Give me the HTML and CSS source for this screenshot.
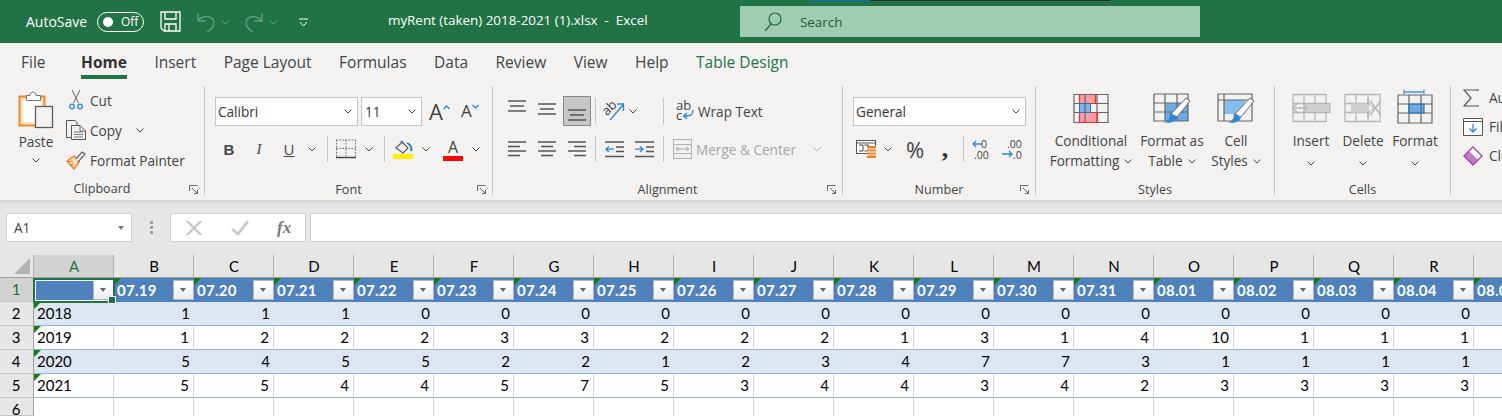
FILE: index.html
```html
<!DOCTYPE html>
<html lang="en">
<head>
<meta charset="utf-8">
<title>myRent (taken) 2018-2021 (1).xlsx - Excel</title>
<link rel="stylesheet" href="styles.css">
</head>
<body>
<div class="app">
<header class="titlebar">
  <div class="strip"><span class="strip-blue"></span><span class="strip-dark"></span></div>
  <span class="autosave">AutoSave</span>
  <span class="toggle"><i class="knob"></i><span>Off</span></span>
  <svg class="qa-save" width="21" height="21" viewBox="0 0 21 21" fill="none" stroke="#fff" stroke-width="1.3"><path d="M1 1H20V20H4L1 17Z"/><path d="M5 1V8H16V1M5 20V13H16V20M9 13V20"/></svg>
  <svg class="qa-undo" width="20" height="20" viewBox="0 0 20 20" fill="none" stroke="#5e9b7c" stroke-width="1.5"><path d="M2 1V9H10M2 9C8 2 18 4 18 11C18 15 15 17 11 20"/></svg>
  <svg class="qa-chev" width="8" height="5" viewBox="0 0 8 5" fill="none" stroke="#5e9b7c"><path d="M0.5 0.5L4 4L7.5 0.5"/></svg>
  <svg class="qa-redo" width="20" height="20" viewBox="0 0 20 20" fill="none" stroke="#5e9b7c" stroke-width="1.5"><path d="M18 1V9H10M18 9C12 2 2 4 2 11C2 15 5 17 9 20"/></svg>
  <svg class="qa-chev" width="8" height="5" viewBox="0 0 8 5" fill="none" stroke="#5e9b7c"><path d="M0.5 0.5L4 4L7.5 0.5"/></svg>
  <svg class="qa-more" width="9" height="9" viewBox="0 0 9 9" fill="none" stroke="#fff"><path d="M0 1H9M1 4L4.5 8L8 4"/></svg>
  <span class="doc-title">myRent (taken) 2018-2021 (1).xlsx&nbsp; -&nbsp; Excel</span>
  <div class="search">
    <svg width="18" height="20" viewBox="0 0 18 20" fill="none" stroke="#1f6b43" stroke-width="1.2"><circle cx="11" cy="7" r="6"/><path d="M7 12L1 19"/></svg>
    <span>Search</span>
  </div>
</header>

<nav class="tabs">
  <span class="tab tab-file">File</span>
  <span class="tab tab-active">Home</span>
  <span class="tab">Insert</span>
  <span class="tab">Page Layout</span>
  <span class="tab">Formulas</span>
  <span class="tab">Data</span>
  <span class="tab">Review</span>
  <span class="tab">View</span>
  <span class="tab">Help</span>
  <span class="tab tab-ctx">Table Design</span>
</nav>

<section class="ribbon">
  <div class="group g-clip">
    <div class="group-body clip-body">
      <div class="paste">
        <svg width="36" height="39" viewBox="0 0 36 39" fill="none">
          <rect x="1.5" y="6.5" width="25" height="29" fill="#fde3b8" stroke="#e88a2e" stroke-width="2"/>
          <rect x="5" y="10" width="18" height="22" fill="#fff"/>
          <path d="M8.500 10.500V5.500H12C12 1 18 1 18 5.500H22.500V10.500Z" fill="#fff" stroke="#737373"/>
          <rect x="17.500" y="16.500" width="17" height="21" fill="#f3f2f1" stroke="#5c5c5c" stroke-width="1.300"/>
        </svg>
        <span class="paste-label">Paste</span>
        <svg class="chev" width="8" height="5" viewBox="0 0 8 5"><path d="M0.500 0.500L4 4L7.500 0.500"/></svg>
      </div>
      <div class="clip-list">
        <div class="clip-row">
          <span class="clip-ic"><svg width="14" height="20" viewBox="0 0 14 20" fill="none"><path d="M3 0L9.500 13M11 0L4.500 13" stroke="#666"/><circle cx="3" cy="16.500" r="2.300" stroke="#2b88d8" stroke-width="1.300"/><circle cx="11" cy="16.500" r="2.300" stroke="#2b88d8" stroke-width="1.300"/></svg></span>
          <span>Cut</span>
        </div>
        <div class="clip-row">
          <span class="clip-ic"><svg width="20" height="20" viewBox="0 0 20 20" fill="none" stroke="#555"><path d="M5.500 17.500H0.500V0.500H9L11 2.500V5"/><path d="M5.500 5.500H14L19.500 11V19.500H5.500Z" fill="#f3f2f1"/><path d="M14 5.500V11H19.500M8 12H17M8 14.500H17M8 17H17" stroke-width=".8"/></svg></span>
          <span>Copy</span>
          <svg class="chev copy-chev" width="8" height="5" viewBox="0 0 8 5"><path d="M0.500 0.500L4 4L7.500 0.500"/></svg>
        </div>
        <div class="clip-row">
          <span class="clip-ic"><svg width="20" height="19" viewBox="0 0 20 19" fill="none"><path d="M1 10L8 5L13 11L8 18Z" fill="#fbe0bd" stroke="#e8842c" stroke-width="1.500"/><path d="M1.500 10L7 11M4 14L8 13" stroke="#e8842c"/><path d="M10 8L16 1L19 3L12 11" stroke="#666" stroke-width="1.300" fill="#fff"/></svg></span>
          <span>Format Painter</span>
        </div>
      </div>
    </div>
    <div class="group-label">Clipboard</div>
    <svg class="launcher" width="9" height="9" viewBox="0 0 9 9" fill="none" stroke="#666"><path d="M0.500 6V0.500H8.500M3 3L8.500 8.500M5 8.500H8.500V5"/></svg>
  </div>

  <div class="group g-font">
    <div class="group-body">
      <div class="tool-row font-row1">
        <span class="combo combo-font"><span>Calibri</span><svg class="chev" width="8" height="5" viewBox="0 0 8 5"><path d="M0.500 0.500L4 4L7.500 0.500"/></svg></span>
        <span class="combo combo-size"><span>11</span><svg class="chev" width="8" height="5" viewBox="0 0 8 5"><path d="M0.500 0.500L4 4L7.500 0.500"/></svg></span>
        <span class="grow">A<svg width="7" height="5" viewBox="0 0 7 5" fill="none" stroke="#2b88d8" stroke-width="1.300"><path d="M0.500 4L3.500 1L6.500 4"/></svg></span>
        <span class="shrink">A<svg width="7" height="5" viewBox="0 0 7 5" fill="none" stroke="#2b88d8" stroke-width="1.300"><path d="M0.500 1L3.500 4L6.500 1"/></svg></span>
      </div>
      <div class="tool-row font-row2">
        <span class="btn fmt-b">B</span>
        <span class="btn fmt-i">I</span>
        <span class="btn fmt-u">U</span>
        <span class="dd"><svg class="chev" width="8" height="5" viewBox="0 0 8 5"><path d="M0.500 0.500L4 4L7.500 0.500"/></svg></span>
        <span class="sep"></span>
        <span class="btn"><svg width="20" height="20" viewBox="0 0 20 20" fill="none" stroke="#666"><path d="M0.500 1V18M19.500 1V18M0.500 1H19.500M0.500 9.500H19.500M10 1V18" stroke-dasharray="1.500 1.500"/><path d="M0 18.500H20" stroke="#444" stroke-width="1.500"/></svg></span>
        <span class="dd"><svg class="chev" width="8" height="5" viewBox="0 0 8 5"><path d="M0.500 0.500L4 4L7.500 0.500"/></svg></span>
        <span class="sep"></span>
        <span class="btn"><svg width="20" height="20" viewBox="0 0 20 20" fill="none"><path d="M3 9L9 3L15 9L10 14Z" fill="#f3f2f1" stroke="#555" stroke-width="1.100"/><path d="M8 2L10 4M14 4C18 6 19 9 18 12" stroke="#1e78c8" stroke-width="1.800"/><rect y="15" width="20" height="5" fill="#ffee00"/></svg></span>
        <span class="dd"><svg class="chev" width="8" height="5" viewBox="0 0 8 5"><path d="M0.500 0.500L4 4L7.500 0.500"/></svg></span>
        <span class="btn color-btn"><span class="color-a">A</span><i class="color-bar"></i></span>
        <span class="dd"><svg class="chev" width="8" height="5" viewBox="0 0 8 5"><path d="M0.500 0.500L4 4L7.500 0.500"/></svg></span>
      </div>
    </div>
    <div class="group-label">Font</div>
    <svg class="launcher" width="9" height="9" viewBox="0 0 9 9" fill="none" stroke="#666"><path d="M0.500 6V0.500H8.500M3 3L8.500 8.500M5 8.500H8.500V5"/></svg>
  </div>

  <div class="group g-align">
    <div class="group-body">
      <div class="tool-row align-row">
        <span class="btn"><svg width="20" height="30" viewBox="0 0 20 30" stroke="#555" stroke-width="1.400"><path d="M1 5H19M3 10H17M1 15H19"/></svg></span>
        <span class="btn"><svg width="20" height="30" viewBox="0 0 20 30" stroke="#555" stroke-width="1.400"><path d="M1 8H19M3 13H17M1 18H19"/></svg></span>
        <span class="btn btn-on"><svg width="20" height="28" viewBox="0 0 20 28" stroke="#555" stroke-width="1.400"><path d="M1 13H19M3 18H17M1 23H19"/></svg></span>
        <span class="sep sep-a"></span>
        <span class="btn-orient"><svg width="22" height="22" viewBox="0 0 22 22" fill="none"><text x="0" y="13" class="svg-ab" transform="rotate(-45 6 10)">ab</text><path d="M7 20L20 5M14 4H20.500V11" stroke="#2b88d8" stroke-width="1.300"/></svg></span>
        <span class="dd"><svg class="chev" width="8" height="5" viewBox="0 0 8 5"><path d="M0.500 0.500L4 4L7.500 0.500"/></svg></span>
        <span class="sep sep-b"></span>
        <span class="wide-btn"><svg width="18" height="22" viewBox="0 0 18 22" fill="none"><text x="0" y="10" class="svg-ab">ab</text><text x="0" y="20" class="svg-ab">c</text><path d="M17 10C17 15 15 16 8 16M11 13L7.500 16L11 19" stroke="#2b88d8" stroke-width="1.300"/></svg><span>Wrap Text</span></span>
      </div>
      <div class="tool-row align-row align-row2">
        <span class="btn"><svg width="20" height="16" viewBox="0 0 20 16" stroke="#555" stroke-width="1.300"><path d="M1 1H19M1 5.500H13M1 10H19M1 14.500H13"/></svg></span>
        <span class="btn"><svg width="20" height="16" viewBox="0 0 20 16" stroke="#555" stroke-width="1.300"><path d="M1 1H19M4 5.500H16M1 10H19M4 14.500H16"/></svg></span>
        <span class="btn"><svg width="20" height="16" viewBox="0 0 20 16" stroke="#555" stroke-width="1.300"><path d="M1 1H19M7 5.500H19M1 10H19M7 14.500H19"/></svg></span>
        <span class="sep sep-a"></span>
        <span class="btn btn-ind"><svg width="19" height="17" viewBox="0 0 19 17" fill="none"><path d="M0 1H19M11 6H19M11 10.500H19M0 15.500H19" stroke="#555" stroke-width="1.300"/><path d="M9 8.200H1M4 5.500L1 8.200L4 11" stroke="#2b88d8" stroke-width="1.300"/></svg></span>
        <span class="btn btn-ind"><svg width="19" height="17" viewBox="0 0 19 17" fill="none"><path d="M0 1H19M11 6H19M11 10.500H19M0 15.500H19" stroke="#555" stroke-width="1.300"/><path d="M0 8.200H8M5 5.500L8 8.200L5 11" stroke="#2b88d8" stroke-width="1.300"/></svg></span>
        <span class="sep sep-c"></span>
        <span class="wide-btn merge"><svg width="19" height="20" viewBox="0 0 19 20" fill="none" stroke="#b3b3b3"><rect x=".5" y=".5" width="18" height="19" stroke-width="1.200"/><path d="M0 5.500H19M0 14.500H19"/><path d="M3 10H16M6 8L3 10L6 12M13 8L16 10L13 12" stroke="#a8a8a8"/></svg><span>Merge &amp; Center</span><svg class="chev chev-off merge-chev" width="8" height="5" viewBox="0 0 8 5"><path d="M0.500 0.500L4 4L7.500 0.500"/></svg></span>
      </div>
    </div>
    <div class="group-label">Alignment</div>
    <svg class="launcher" width="9" height="9" viewBox="0 0 9 9" fill="none" stroke="#666"><path d="M0.500 6V0.500H8.500M3 3L8.500 8.500M5 8.500H8.500V5"/></svg>
  </div>

  <div class="group g-num">
    <div class="group-body">
      <div class="tool-row num-row1">
        <span class="combo combo-num"><span>General</span><svg class="chev" width="8" height="5" viewBox="0 0 8 5"><path d="M0.500 0.500L4 4L7.500 0.500"/></svg></span>
      </div>
      <div class="tool-row num-row2">
        <span class="btn"><svg width="21" height="20" viewBox="0 0 21 20" fill="none"><rect x=".5" y="1.500" width="19" height="13" fill="#fff" stroke="#555"/><path d="M.5 4H19.500" stroke="#555"/><path d="M3 6H7V12H3M8.500 6H12.500V12H8.500" stroke="#444"/><path d="M11 7H20V19H11Z" fill="#e8842c"/><path d="M11 10H20M11 13H20M11 16H20" stroke="#fff"/></svg></span>
        <span class="dd dd-num"><svg class="chev" width="8" height="5" viewBox="0 0 8 5"><path d="M0.500 0.500L4 4L7.500 0.500"/></svg></span>
        <span class="btn pct">%</span>
        <span class="btn comma">,</span>
        <span class="sep sep-d"></span>
        <span class="btn dec"><svg width="20" height="21" viewBox="0 0 20 21" fill="none"><text x="9" y="9" class="svg-num">0</text><text x="2" y="20" class="svg-num">.00</text><path d="M10 5H1M4 2L1 5L4 8" stroke="#2b88d8" stroke-width="1.300"/></svg></span>
        <span class="btn dec"><svg width="20" height="21" viewBox="0 0 20 21" fill="none"><text x="5" y="9" class="svg-num">.00</text><text x="11" y="20" class="svg-num">.0</text><path d="M0 15H10M7 12L10 15L7 18" stroke="#2b88d8" stroke-width="1.300"/></svg></span>
      </div>
    </div>
    <div class="group-label">Number</div>
    <svg class="launcher" width="9" height="9" viewBox="0 0 9 9" fill="none" stroke="#666"><path d="M0.500 6V0.500H8.500M3 3L8.500 8.500M5 8.500H8.500V5"/></svg>
  </div>

  <div class="group g-styles">
    <div class="group-body big-row">
      <div class="big big-cf">
        <svg width="36" height="30" viewBox="0 0 36 30" fill="none">
          <path d="M6.500 1.500H22.500V10H6.500Z" fill="#ff9aa2"/><path d="M6.500 10H17.500V19H6.500Z" fill="#7db5e6"/><path d="M6.500 19H24.500V28.500H6.500Z" fill="#ff9aa2"/>
          <path d="M1 1H35V29H1ZM1 10H35M1 19H35M12 1V29M24 1V29" stroke="#666" stroke-width="1.200"/>
          <path d="M6.500 1V10M22.500 1V10H6.500M6.500 19H24.500V29H6.500V19" stroke="#e0312f" stroke-width="1.200"/><path d="M6.500 10H17.500V19H6.500Z" stroke="#2579c4"/>
        </svg>
        <span class="big-text">Conditional<br>Formatting<svg class="chev chev-in" width="8" height="5" viewBox="0 0 8 5"><path d="M0.500 0.500L4 4L7.500 0.500"/></svg></span>
      </div>
      <div class="big big-ft">
        <svg width="38" height="31" viewBox="0 0 38 31" fill="none">
          <path d="M12 10H35V28H12Z" fill="#6cace4"/>
          <path d="M1 1H35V28H1ZM1 10H35M1 19H35M12 1V28M24 1V28" stroke="#666" stroke-width="1.200"/>
          <path d="M18 21L33 5L37 8L24 24Z" fill="#fff" stroke="#666"/><path d="M10 29C14 29 17 27 17 20L24 25C22 29 16 31 10 29Z" fill="#2b88d8"/>
        </svg>
        <span class="big-text">Format as<br>Table<svg class="chev chev-in" width="8" height="5" viewBox="0 0 8 5"><path d="M0.500 0.500L4 4L7.500 0.500"/></svg></span>
      </div>
      <div class="big big-cs">
        <svg width="38" height="31" viewBox="0 0 38 31" fill="none">
          <path d="M7 7H28V21H7Z" fill="#85bdec"/>
          <path d="M1 1H35V28H1ZM1 7H35M7 1V28" stroke="#666" stroke-width="1.200"/>
          <path d="M18 21L33 5L37 8L24 24Z" fill="#fff" stroke="#666"/><path d="M10 29C14 29 17 27 17 20L24 25C22 29 16 31 10 29Z" fill="#2b88d8"/>
        </svg>
        <span class="big-text">Cell<br>Styles<svg class="chev chev-in" width="8" height="5" viewBox="0 0 8 5"><path d="M0.500 0.500L4 4L7.500 0.500"/></svg></span>
      </div>
    </div>
    <div class="group-label">Styles</div>
  </div>

  <div class="group g-cells">
    <div class="group-body big-row">
      <div class="big big-cell">
        <svg width="40" height="30" viewBox="0 0 40 30" fill="none"><path d="M2 1H35V28H2ZM2 10H35M2 19H35M13 1V28M24 1V28" stroke="#b5b5b5" stroke-width="1.300"/><path d="M14 10H39V19H14Z" fill="#cfcfcf" stroke="#b5b5b5"/><path d="M17 14.500H2M7 9L1.500 14.500L7 20" stroke="#b5b5b5" stroke-width="1.300"/></svg>
        <span class="big-text">Insert<br><svg class="chev" width="8" height="5" viewBox="0 0 8 5"><path d="M0.500 0.500L4 4L7.500 0.500"/></svg></span>
      </div>
      <div class="big big-cell">
        <svg width="38" height="30" viewBox="0 0 38 30" fill="none"><path d="M1 1H36V28H1ZM1 10H26M1 19H26M12 1V28M24 1V28" stroke="#b5b5b5" stroke-width="1.300"/><path d="M7 10H24V19H7Z" fill="#cfcfcf"/><path d="M24 5V10L30 14.500L24 19V24" stroke="#b5b5b5"/><path d="M26 7L37 22M37 7L26 22" stroke="#b5b5b5" stroke-width="1.300"/></svg>
        <span class="big-text">Delete<br><svg class="chev" width="8" height="5" viewBox="0 0 8 5"><path d="M0.500 0.500L4 4L7.500 0.500"/></svg></span>
      </div>
      <div class="big big-cell big-fmt">
        <svg width="36" height="36" viewBox="0 0 36 36" fill="none"><path d="M7 4H27M7 1.500V6.500M27 1.500V6.500" stroke="#4a9ce0" stroke-width="1.300"/><path d="M12 16H27V25H12Z" fill="#6cace4"/><path d="M1 7H35V35H1ZM1 16H35M1 25H35M12 7V35M24 7V35" stroke="#666" stroke-width="1.200"/><path d="M12 16H27V25H12Z" stroke="#1e78c8" stroke-width="1.200"/></svg>
        <span class="big-text">Format<br><svg class="chev" width="8" height="5" viewBox="0 0 8 5"><path d="M0.500 0.500L4 4L7.500 0.500"/></svg></span>
      </div>
    </div>
    <div class="group-label">Cells</div>
  </div>

  <div class="group g-edit">
    <div class="group-body edit-list">
      <div class="edit-row"><span class="edit-ic"><svg width="16" height="18" viewBox="0 0 16 18" fill="none" stroke="#555" stroke-width="1.200"><path d="M15 2V1H1L8 9L1 17H15V16"/></svg></span><span>AutoSum</span></div>
      <div class="edit-row"><span class="edit-ic"><svg width="20" height="18" viewBox="0 0 20 18" fill="none"><path d="M.5 .5H19.500V17.500H.5Z" fill="#fff" stroke="#555"/><path d="M0 3.500H20" stroke="#555"/><path d="M10 6V14M6.500 10.500L10 14L13.500 10.500" stroke="#2b88d8" stroke-width="1.300"/></svg></span><span>Fill</span></div>
      <div class="edit-row"><span class="edit-ic"><svg width="20" height="20" viewBox="0 0 20 20" fill="none"><path d="M1 10L10 1L19 10L10 19Z" fill="#fff"/><path d="M1 10L6 5L15 14L10 19Z" fill="#c27cc7"/><path d="M1 10L10 1L19 10L10 19Z" stroke="#a73fb0" stroke-width="1.300"/></svg></span><span>Clear</span></div>
    </div>
    <div class="group-label"></div>
  </div>
</section>
<div class="ribbon-shadow"></div>

<section class="formula-bar">
  <div class="name-box"><span>A1</span><i class="tri"></i></div>
  <div class="grip"><i></i><i></i><i></i></div>
  <div class="fx-box">
    <svg width="18" height="16" viewBox="0 0 18 16" fill="none" stroke="#c8c8c8" stroke-width="2.400"><path d="M2 1L16 15M16 1L2 15"/></svg>
    <svg width="18" height="16" viewBox="0 0 18 16" fill="none" stroke="#c8c8c8" stroke-width="2.800"><path d="M1 9L7 14L17 1"/></svg>
    <span class="fx">fx</span>
  </div>
  <div class="formula-input"></div>
</section>

<main class="sheet">
  <div class="corner"><i></i></div>
  <div class="col on">A</div><div class="col">B</div><div class="col">C</div><div class="col">D</div><div class="col">E</div><div class="col">F</div><div class="col">G</div><div class="col">H</div><div class="col">I</div><div class="col">J</div><div class="col">K</div><div class="col">L</div><div class="col">M</div><div class="col">N</div><div class="col">O</div><div class="col">P</div><div class="col">Q</div><div class="col">R</div><div class="col">S</div>

  <div class="row-h on">1</div>
  <div class="hd hd-a"><span class="sel"></span><i class="fb"></i></div>
  <div class="hd">07.19<i class="fb"></i></div><div class="hd">07.20<i class="fb"></i></div><div class="hd">07.21<i class="fb"></i></div><div class="hd">07.22<i class="fb"></i></div><div class="hd">07.23<i class="fb"></i></div><div class="hd">07.24<i class="fb"></i></div><div class="hd">07.25<i class="fb"></i></div><div class="hd">07.26<i class="fb"></i></div><div class="hd">07.27<i class="fb"></i></div><div class="hd">07.28<i class="fb"></i></div><div class="hd">07.29<i class="fb"></i></div><div class="hd">07.30<i class="fb"></i></div><div class="hd">07.31<i class="fb"></i></div><div class="hd">08.01<i class="fb"></i></div><div class="hd">08.02<i class="fb"></i></div><div class="hd">08.03<i class="fb"></i></div><div class="hd">08.04<i class="fb"></i></div><div class="hd">08.05<i class="fb"></i></div>

  <div class="row-h">2</div>
  <div class="c band yr">2018</div><div class="c band">1</div><div class="c band">1</div><div class="c band">1</div><div class="c band">0</div><div class="c band">0</div><div class="c band">0</div><div class="c band">0</div><div class="c band">0</div><div class="c band">0</div><div class="c band">0</div><div class="c band">0</div><div class="c band">0</div><div class="c band">0</div><div class="c band">0</div><div class="c band">0</div><div class="c band">0</div><div class="c band">0</div><div class="c band"></div>

  <div class="row-h">3</div>
  <div class="c plain yr">2019</div><div class="c plain">1</div><div class="c plain">2</div><div class="c plain">2</div><div class="c plain">2</div><div class="c plain">3</div><div class="c plain">3</div><div class="c plain">2</div><div class="c plain">2</div><div class="c plain">2</div><div class="c plain">1</div><div class="c plain">3</div><div class="c plain">1</div><div class="c plain">4</div><div class="c plain">10</div><div class="c plain">1</div><div class="c plain">1</div><div class="c plain">1</div><div class="c plain"></div>

  <div class="row-h">4</div>
  <div class="c band yr">2020</div><div class="c band">5</div><div class="c band">4</div><div class="c band">5</div><div class="c band">5</div><div class="c band">2</div><div class="c band">2</div><div class="c band">1</div><div class="c band">2</div><div class="c band">3</div><div class="c band">4</div><div class="c band">7</div><div class="c band">7</div><div class="c band">3</div><div class="c band">1</div><div class="c band">1</div><div class="c band">1</div><div class="c band">1</div><div class="c band"></div>

  <div class="row-h">5</div>
  <div class="c plain yr">2021</div><div class="c plain">5</div><div class="c plain">5</div><div class="c plain">4</div><div class="c plain">4</div><div class="c plain">5</div><div class="c plain">7</div><div class="c plain">5</div><div class="c plain">3</div><div class="c plain">4</div><div class="c plain">4</div><div class="c plain">3</div><div class="c plain">4</div><div class="c plain">2</div><div class="c plain">3</div><div class="c plain">3</div><div class="c plain">3</div><div class="c plain">3</div><div class="c plain"></div>

  <div class="row-h">6</div>
  <div class="c empty"></div><div class="c empty"></div><div class="c empty"></div><div class="c empty"></div><div class="c empty"></div><div class="c empty"></div><div class="c empty"></div><div class="c empty"></div><div class="c empty"></div><div class="c empty"></div><div class="c empty"></div><div class="c empty"></div><div class="c empty"></div><div class="c empty"></div><div class="c empty"></div><div class="c empty"></div><div class="c empty"></div><div class="c empty"></div><div class="c empty"></div>
</main>
</div>
</body>
</html>
```

FILE: styles.css
```css
* { box-sizing: border-box; }
html, body { margin: 0; padding: 0; height: 100%; overflow: hidden; background: #e6e6e6; }
.app { width: 1502px; height: 416px; overflow: hidden; font-family: "Open Sans", "Noto Sans", sans-serif; color: #444; }

/* title bar */
.titlebar { position: relative; height: 43px; background: #217346; color: #fff; display: flex; align-items: center; padding-left: 26px; font-size: 14px; }
.strip { position: absolute; top: 0; left: 809px; display: flex; height: 1px; }
.strip-blue { width: 61px; background: #0f6cbd; }
.strip-dark { width: 240px; background: #2b2b2b; }
.autosave { width: 71px; }
.toggle { width: 47px; height: 20px; border: 1px solid #fff; border-radius: 10px; display: flex; align-items: center; gap: 8px; padding-left: 5px; font-size: 12px; }
.knob { width: 10px; height: 10px; border-radius: 50%; background: #fff; }
.qa-save { margin-left: 16px; }
.qa-undo { margin-left: 15px; }
.qa-redo { margin-left: 15px; }
.qa-chev { margin-left: 5px; margin-top: 2px; }
.qa-more { margin-left: 22px; margin-top: 2px; }
.doc-title { position: absolute; left: 388px; top: 11px; font-size: 13.4px; white-space: nowrap; }
.search { position: absolute; left: 740px; top: 6px; width: 460px; height: 31px; background: #9fcdb3; display: flex; align-items: center; padding-left: 24px; gap: 18px; color: #1f5c3a; font-size: 13.4px; }

/* tabs */
.tabs { height: 37px; background: #f3f2f1; display: flex; padding-left: 21px; gap: 27.5px; font-size: 15.5px; line-height: 38px; color: #444; }
.tab { display: block; height: 36px; white-space: nowrap; }
.tab-file { margin-right: 8px; }
.tab-active { font-weight: 700; color: #333; border-bottom: 4px solid #217346; }
.tab-ctx { color: #217346; }

/* ribbon */
.ribbon { height: 120px; background: #f3f2f1; display: flex; padding-top: 6px; overflow: hidden; font-size: 13.6px; }
.group { position: relative; height: 109px; border-right: 1px solid #c8c6c4; display: flex; flex-direction: column; flex: none; }
.group-body { height: 94px; padding-top: 10px; }
.group-label { height: 15px; line-height: 20px; text-align: center; font-size: 12.6px; color: #444; }
.launcher { position: absolute; right: 6px; bottom: 1px; }
.g-clip { width: 205px; }
.g-font { width: 288px; }
.g-align { width: 350px; }
.g-num { width: 193px; }
.g-styles { width: 239px; }
.g-cells { width: 176px; }
.g-edit { border-right: 0; width: 60px; overflow: hidden; }

.chev { fill: none; stroke: #444; flex: none; }
.chev-off { stroke: #b3b3b3; }
.chev-in { margin-left: 5px; vertical-align: 2px; }
.sep { width: 1px; height: 26px; background: #c8c6c4; flex: none; margin: 0 3px 0 7px; }
.btn { width: 30px; height: 30px; display: flex; align-items: center; justify-content: center; flex: none; }
.dd { width: 16px; height: 30px; display: flex; align-items: center; justify-content: center; flex: none; }
.tool-row { display: flex; align-items: center; height: 30px; }

/* clipboard */
.clip-body { display: flex; padding: 0; margin-top: -1px; }
.paste { width: 56px; margin-left: 8px; display: flex; flex-direction: column; align-items: center; padding-top: 5px; flex: none; }
.paste-label { margin-top: 3px; line-height: 20px; }
.paste .chev { margin-top: 6px; }
.clip-list { display: flex; flex-direction: column; }
.clip-row { height: 30px; display: flex; align-items: center; white-space: nowrap; }
.clip-ic { width: 24px; margin-right: 2px; display: flex; justify-content: center; }
.copy-chev { margin-left: 14px; }

/* font */
.font-row1 { padding-left: 10px; }
.combo { height: 29px; background: #fff; border: 1px solid #c6c6c6; display: flex; align-items: center; justify-content: space-between; padding: 0 5px 0 2px; font-size: 13.6px; color: #333; flex: none; }
.combo-font { width: 143px; margin-right: 3px; }
.combo-size { width: 61px; padding-left: 3px; }
.grow { margin-left: 7px; width: 32px; font-size: 22px; display: flex; align-items: flex-start; color: #444; line-height: 26px; }
.grow svg { margin-top: 7px; }
.shrink { width: 22px; font-size: 17px; display: flex; align-items: flex-start; color: #444; line-height: 26px; padding-top: 0; }
.shrink svg { margin-top: 6px; }
.font-row2 { margin-top: 8px; padding-left: 9px; }
.fmt-b { font-weight: 700; font-size: 15px; font-family: "Liberation Sans", sans-serif; }
.fmt-i { font-style: italic; font-size: 15px; font-family: "Liberation Serif", serif; }
.fmt-u { text-decoration: underline; font-size: 15px; }
.color-btn { position: relative; margin-left: 4px; flex-direction: column; }
.color-a { font-size: 16px; line-height: 18px; }
.color-bar { width: 20px; height: 5px; background: #f00; }

/* alignment */
.align-row { padding-left: 9px; }
.align-row2 { margin-top: 8px; }
.btn-on { height: 30px; background: #c6c6c6; border: 1px solid #8a8a8a; width: 28px; margin-left: 1px; margin-right: 1px; }
.sep-a { margin: 0 3px 0 3px; }
.sep-b { margin: 0 12px 0 22px; }
.sep-c { margin: 0 9px 0 4px; }
.btn-orient { width: 22px; margin-left: 4px; display: flex; }
.btn-ind { flex: none; }
.wide-btn { display: flex; align-items: center; gap: 4px; white-space: nowrap; }
.merge { color: #a8a8a8; }
.merge-chev { margin-left: 13px; }
.svg-ab { font-size: 13px; fill: #444; font-family: "Open Sans", sans-serif; }
.svg-num { font-size: 10.5px; fill: #444; font-family: "Open Sans", sans-serif; }

/* number */
.num-row1 { padding-left: 10px; }
.combo-num { width: 173px; height: 29px; }
.num-row2 { margin-top: 8px; padding-left: 8px; }
.dd-num { width: 14px; }
.pct { margin-left: 5px; font-size: 22px; }
.comma { font-size: 26px; font-weight: 700; font-family: "Liberation Serif", serif; line-height: 16px; color: #333; }
.sep-d { margin: 0 3px 0 3px; }

/* big buttons */
.big-row { display: flex; padding: 7px 0 0 10px; }
.big { display: flex; flex-direction: column; align-items: center; flex: none; }
.big > svg { height: 31px; }
.big-text { margin-top: 7px; line-height: 20px; text-align: center; white-space: nowrap; }
.big-cf { width: 90px; }
.big-ft { width: 72px; }
.big-cs { width: 56px; }
.big-cell { width: 52px; }
.big-fmt > svg { height: 36px; margin-top: -5px; }
.big-fmt .big-text { margin-top: 7px; }

/* editing */
.edit-list { padding: 0 0 0 12px; margin-top: -3px; }
.edit-row { height: 29px; display: flex; align-items: center; white-space: nowrap; }
.edit-ic { width: 26px; display: flex; flex: none; }

.ribbon-shadow { height: 5px; background: linear-gradient(#d2d2d2, #e6e6e6); }

/* formula bar */
.formula-bar { height: 50px; background: #e6e6e6; display: flex; padding: 8px 0 0 6px; align-items: flex-start; }
.name-box { width: 126px; height: 29px; background: #fff; border: 1px solid #cfcfcf; display: flex; align-items: center; justify-content: space-between; padding: 0 7px; font-size: 13.6px; color: #444; }
.tri { width: 0; height: 0; border-left: 3.5px solid transparent; border-right: 3.5px solid transparent; border-top: 4px solid #777; }
.grip { width: 38px; height: 29px; display: flex; flex-direction: column; align-items: center; justify-content: center; gap: 2px; }
.grip i { width: 3px; height: 3px; background: #a0a0a0; }
.fx-box { width: 136px; height: 29px; background: #fff; border: 1px solid #cfcfcf; display: flex; align-items: center; gap: 28px; padding-left: 14px; margin-right: 4px; }
.fx { font-family: "Liberation Serif", serif; font-style: italic; font-weight: 700; font-size: 17px; color: #777; }
.formula-input { flex: 1; height: 29px; background: #fff; border: 1px solid #cfcfcf; border-right: 0; }

/* sheet */
.sheet { display: grid; grid-template-columns: 34px repeat(19, 80px); grid-template-rows: 23px repeat(5, 24px) 18px; margin-top: 0; font-family: Lato, "Open Sans", sans-serif; font-size: 15px; color: #000; width: 1554px; height: 161px; }
.corner { background: #e6e6e6; border-right: 1px solid #b1b1b1; border-bottom: 1px solid #9f9f9f; display: flex; justify-content: flex-end; padding: 3px 3px 0 0; }
.corner i { width: 0; height: 0; border-left: 16px solid transparent; border-bottom: 16px solid #b4b4b4; }
.col { background: #e6e6e6; border-right: 1px solid #b1b1b1; border-bottom: 1px solid #9f9f9f; text-align: center; line-height: 23px; padding-left: 1px; }
.col.on { background: #d2d2d2; color: #217346; }
.row-h { background: #e6e6e6; border-right: 1px solid #9f9f9f; border-bottom: 1px solid #c6c6c6; text-align: center; line-height: 23px; font-size: 15px; padding-right: 1px; }
.row-h.on { background: #d2d2d2; color: #217346; }
.hd { position: relative; background: #4f81bd; color: #fff; font-weight: 700; line-height: 24px; padding-left: 3px; letter-spacing: .3px; border-bottom: 1px solid #4f81bd; }
.hd::before, .yr::before { content: ""; position: absolute; left: 0; top: 0; border-top: 7px solid #107c10; border-right: 7px solid transparent; }
.hd-a::before { display: none; }
.fb { position: absolute; right: 0; top: 2px; width: 21px; height: 20px; background: linear-gradient(#fff, #e9ecf0); border: 1px solid #b5b5b5; }
.fb::after { content: ""; position: absolute; left: 6px; top: 7px; border-left: 3.5px solid transparent; border-right: 3.5px solid transparent; border-top: 4px solid #666; }
.sel { position: absolute; left: -1px; top: 0; width: 82px; height: 25px; border: 2px solid #217346; box-shadow: inset 0 0 0 1px #fff; z-index: 2; }
.sel::after { content: ""; position: absolute; right: -3px; bottom: -3px; width: 6px; height: 6px; background: #217346; border: 1px solid #fff; }
.c { position: relative; text-align: right; padding-right: 4px; line-height: 23px; border-bottom: 1px solid #95b3d7; }
.band { background: #dce6f1; }
.plain { background: #fff; border-right: 1px solid #d4d4d4; }
.yr { text-align: left; padding-left: 3px; }
.empty { background: #fff; border-right: 1px solid #d4d4d4; border-bottom: 0; }
```
